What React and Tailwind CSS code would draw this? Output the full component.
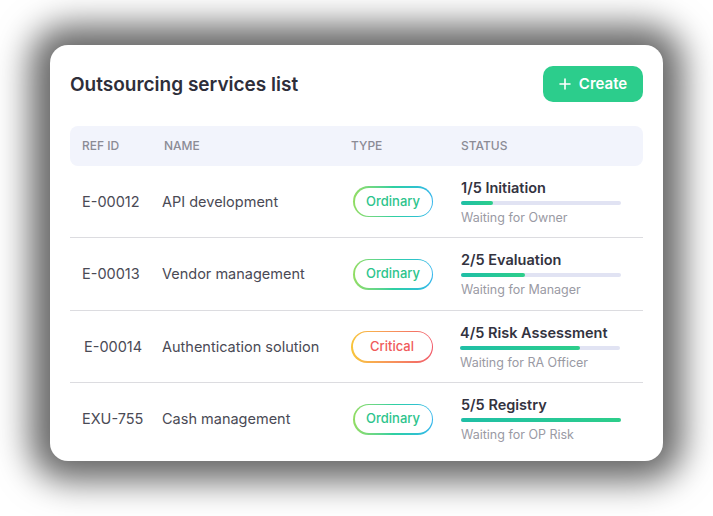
import React from 'react';

const rows = [
    { id: 'E-00012', name: 'API development', type: 'Ordinary', step: '1/5 Initiation', pct: 20, waiting: 'Waiting for Owner', h: 'h-[72px]' },
    { id: 'E-00013', name: 'Vendor management', type: 'Ordinary', step: '2/5 Evaluation', pct: 40, waiting: 'Waiting for Manager', h: 'h-[73px]' },
    { id: 'E-00014', name: 'Authentication solution', type: 'Critical', step: '4/5 Risk Assessment', pct: 75, waiting: 'Waiting for RA Officer', h: 'h-[72px]' },
    { id: 'EXU-755', name: 'Cash management', type: 'Ordinary', step: '5/5 Registry', pct: 100, waiting: 'Waiting for OP Risk', h: 'h-[72px]' },
];

const Badge = ({ type }) => {
    const critical = type === 'Critical';
    return (
        <div
            className={
                critical
                    ? 'rounded-full p-[1.5px] bg-linear-to-r from-[#f8c53a] to-[#f15a6a] w-[82px] h-[32px]'
                    : 'rounded-full p-[1.5px] bg-linear-to-r from-[#92dd62] via-[#2fd0a0] to-[#35b6ec] w-[80px] h-[31px]'
            }
        >
            <div className="flex h-full w-full items-center justify-center rounded-full bg-white">
                <span className={critical ? 'text-[13px] font-medium text-[#f05a5a]' : 'text-[13px] font-medium text-[#2cc48c]'}>
                    {type}
                </span>
            </div>
        </div>
    );
};

const App = () => {
    return (
        <div className="w-[713px] h-[516px] bg-white pt-[45px] pl-[50px]" style={{ fontFamily: 'Inter, "Noto Sans", sans-serif' }}>
            <div className="w-[613px] h-[416px] rounded-[18px] bg-white px-5 pt-[21px] shadow-[0_0_34px_20px_rgba(0,0,0,0.6)]">
                <div className="flex h-[36px] items-center justify-between">
                    <h1 className="mt-[2px] text-[19px] font-semibold text-[#2e2e3a]">Outsourcing services list</h1>
                    <button className="flex h-[36px] w-[100px] items-center justify-center gap-2 rounded-[10px] bg-[#2ccd8c] text-[15px] font-semibold text-white">
                        <svg width="12" height="12" viewBox="0 0 12 12" fill="none" stroke="white" strokeWidth="1.6" strokeLinecap="round">
                            <path d="M6 1v10M1 6h10" />
                        </svg>
                        Create
                    </button>
                </div>

                <div className="mt-[24px]">
                    <div className="flex h-[40px] items-center rounded-lg bg-[#f2f4fc] pl-3 text-[12px] font-medium text-[#8b8b95]">
                        <div className="w-[82px]">REF ID</div>
                        <div className="w-[187px]">NAME</div>
                        <div className="w-[110px]">TYPE</div>
                        <div>STATUS</div>
                    </div>

                    {rows.map((r, i) => (
                        <div key={r.id} className={`flex ${r.h} items-center pl-3 ${i < rows.length - 1 ? 'border-b border-[#dcdce0]' : ''}`}>
                            <div className={r.type === 'Critical' ? 'w-[80px] pl-[2px] text-[14.5px] text-[#4a4a55]' : 'w-[80px] text-[14.5px] text-[#4a4a55]'}>{r.id}</div>
                            <div className="w-[189px] text-[14.5px] text-[#4a4a55]">{r.name}</div>
                            <div className={r.type === 'Critical' ? 'w-[109px]' : 'w-[108px] pl-[2px]'}>
                                <Badge type={r.type} />
                            </div>
                            <div className={r.type === 'Critical' ? 'w-[160px] pt-[1px]' : 'w-[160px] ml-[2px] pt-[1px]'}>
                                <div className="text-[14.5px] font-semibold leading-[18px] text-[#33333f]">{r.step}</div>
                                <div className="mt-[4px] h-[4px] w-[160px] rounded-full bg-[#e1e3f3]">
                                    <div className="h-full rounded-full bg-linear-to-r from-[#1fbfa6] to-[#2dce8a]" style={{ width: `${r.pct}%` }} />
                                </div>
                                <div className="mt-[5px] text-[12.5px] leading-[16px] text-[#9a9aa4]">{r.waiting}</div>
                            </div>
                        </div>
                    ))}
                </div>
            </div>
        </div>
    );
};

export default App;
